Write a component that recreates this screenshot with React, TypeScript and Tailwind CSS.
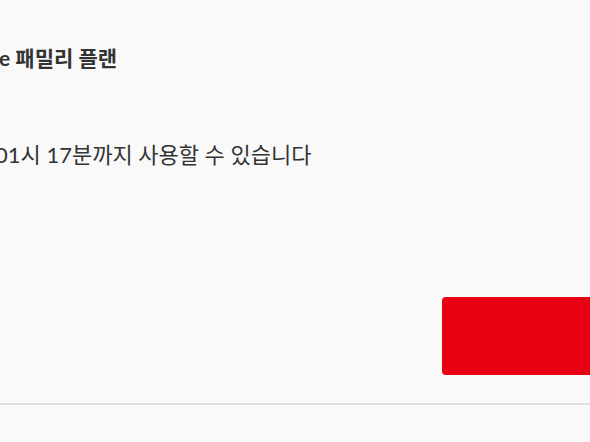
export default function App() {
  return (
    <div className="w-[590px] h-[442px] overflow-hidden bg-[#f9f9f9] relative" style={{ fontFamily: 'Lato, "Noto Sans CJK KR", sans-serif' }}>
      <div className="flex flex-col">
        <div className="pt-[44px] h-[80px] ml-[-1px] text-[21px] font-bold text-[#333] leading-[28px] whitespace-nowrap">e 패밀리 플랜</div>
        <div className="mt-[61px] ml-[-5px] text-[22px] text-[#333] leading-[28px] whitespace-nowrap">01시 17분까지 사용할 수 있습니다</div>
        <div className="flex justify-end mt-[128px]">
          <div className="w-[160px] mr-[-12px] h-[78px] rounded-[4px] bg-[#e60012]" />
        </div>
        <div className="mt-[28px] h-[2px] bg-[#e0e0e0]" />
      </div>
    </div>
  );
}
